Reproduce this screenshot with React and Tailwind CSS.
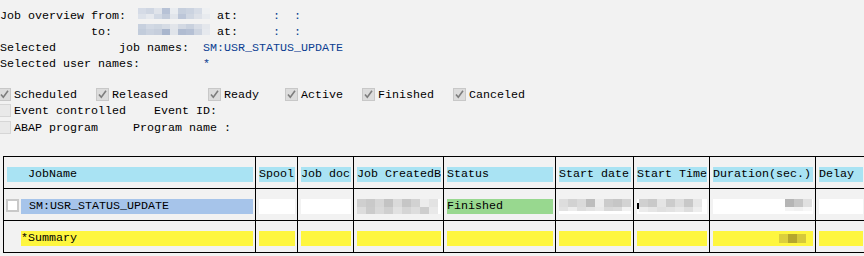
import React from "react";

const mono = "font-['Liberation_Mono','Courier_New',monospace]";

// blurred field: rows of colour cells, each cell `cell` px wide
function Mosaic({ rows, cell = 8, className = "" }) {
  return (
    <div className={`flex flex-col ${className}`}>
      {rows.map((r, i) => (
        <div key={i} className="flex" style={{ height: r.h }}>
          {r.c.map((c, j) => (
            <div key={j} style={{ width: r.w || cell, background: c }} />
          ))}
        </div>
      ))}
    </div>
  );
}

function Check({ checked }) {
  return (
    <span
      className={`inline-flex items-center justify-center w-[13px] h-[13px] shrink-0 border ${
        checked ? "bg-[#dcdcdc] border-[#c8c8c8]" : "bg-[#e9e9e9] border-[#d6d6d6]"
      }`}
    >
      {checked && (
        <svg width="11" height="11" viewBox="0 0 11 11">
          <path d="M2 5.5 L4.3 8.3 L9 1.8" fill="none" stroke="#7d7d7d" strokeWidth="1.6" />
        </svg>
      )}
    </span>
  );
}

function Opt({ label, checked, w }) {
  return (
    <div className={`flex items-start gap-[3px] shrink-0 ${w}`}>
      <Check checked={checked} />
      <span className="leading-[14px]">{label}</span>
    </div>
  );
}

const dateTop = ["#d5dbe6", "#cfd6e2", "#dfe3ea", "#b7c2d6", "#e9ecf0", "#c6cfdd", "#cbd3e0", "#d6dce6", "#eef0f2"];
const dateBot = ["#dde2ea", "#e6e9ee", "#d2d9e4", "#c3ccdb", "#e1e5eb", "#bcc6d8", "#d0d7e2", "#dde1e8", "#e8ebef"];
const date2Top = ["#c7d0de", "#d2d9e4", "#ced6e1", "#d6dce5", "#e2e5ea", "#d3d9e3", "#c9d1de", "#d8dde6", "#e4e7ec"];
const date2Bot = ["#c2ccdb", "#cad2df", "#c6cedc", "#a9b6cd", "#e0e4ea", "#b0bcd1", "#b5c0d4", "#cdd4e0", "#e6e9ee"];

const TimeSep = () => <span className="text-[#0b3d91] whitespace-pre">{"  :  :"}</span>;

function Bar({ bg, className = "", children }) {
  return (
    <div className={`mt-[10px] ml-[3px] mr-[2px] h-[15px] leading-[15px] whitespace-pre overflow-hidden ${bg} ${className}`}>
      {children}
    </div>
  );
}

const headers = ["Spool", "Job doc", "Job CreatedB", "Status", "Start date", "Start Time", "Duration(sec.)", "Delay"];

export default function App() {
  return (
    <div className={`w-[864px] h-[256px] overflow-hidden bg-[#f2f2f2] text-black text-[11.67px] ${mono}`}>
      {/* selection header */}
      <div className="pt-[8px] leading-[16px]">
        <div className="flex h-[16px]">
          <span className="w-[138px] whitespace-pre">Job overview from:</span>
          <Mosaic className="w-[72px]" rows={[{ h: 6, c: dateTop }, { h: 5, c: dateBot }]} />
          <span className="ml-[7px] w-[42px]">at:</span>
          <TimeSep />
        </div>
        <div className="flex h-[16px]">
          <span className="w-[138px] pl-[91px]">to:</span>
          <Mosaic className="w-[72px]" rows={[{ h: 5, c: date2Top }, { h: 6, c: date2Bot }]} />
          <span className="ml-[7px] w-[42px]">at:</span>
          <TimeSep />
        </div>
        <div className="flex h-[16px]">
          <span className="w-[119px]">Selected</span>
          <span className="w-[84px]">job names:</span>
          <span className="text-[#0b3d91]">SM:USR_STATUS_UPDATE</span>
        </div>
        <div className="flex h-[16px]">
          <span className="w-[203px]">Selected user names:</span>
          <span className="text-[#0b3d91]">*</span>
        </div>
      </div>

      {/* status checkboxes */}
      <div className="mt-[16px] -ml-[2px] flex flex-col gap-[3px]">
        <div className="flex h-[13px]">
          <Opt label="Scheduled" checked w="w-[98px]" />
          <Opt label="Released" checked w="w-[112px]" />
          <Opt label="Ready" checked w="w-[77px]" />
          <Opt label="Active" checked w="w-[77px]" />
          <Opt label="Finished" checked w="w-[91px]" />
          <Opt label="Canceled" checked w="w-[100px]" />
        </div>
        <div className="flex h-[13px]">
          <Opt label="Event controlled" w="w-[156px]" />
          <span className="leading-[14px]">Event ID:</span>
        </div>
        <div className="flex h-[14px] mt-[1px]">
          <Opt label="ABAP program" w="w-[135px]" />
          <span className="leading-[14px] whitespace-pre">Program name :</span>
        </div>
      </div>

      {/* job list */}
      <div className="mt-[21px] ml-[3px] w-max grid grid-cols-[251px_41px_55px_89px_111px_77px_75px_105px_49px] grid-rows-[31px_31px_31px] gap-px p-px bg-black">
        <div className="bg-[#f2f2f2]">
          <Bar bg="bg-[#a9e3f3]" className="pl-[21px]">JobName</Bar>
        </div>
        {headers.map((h) => (
          <div key={h} className="bg-[#f2f2f2]">
            <Bar bg="bg-[#a9e3f3]">{h}</Bar>
          </div>
        ))}

        {/* job row */}
        <div className="bg-[#f2f2f2] flex items-start">
          <span className="ml-[2px] mt-[10px] w-[13px] h-[13px] border-2 border-[#c9c9c9] bg-white shrink-0" />
          <div className="mt-[10px] ml-[2px] mr-[2px] flex-1 h-[15px] leading-[15px] pl-[8px] bg-[#a6c4ea] whitespace-pre">
            SM:USR_STATUS_UPDATE
          </div>
        </div>
        <div className="bg-[#f2f2f2]"><Bar bg="bg-white" /></div>
        <div className="bg-[#f2f2f2]"><Bar bg="bg-white" /></div>
        <div className="bg-[#f2f2f2]">
          <Bar bg="bg-white">
            <Mosaic
              cell={9}
              rows={[
                { h: 8, c: ["#cfcfcf", "#c9c9c9", "#d6d6d6", "#c3c3c3", "#dadada", "#c6c6c6", "#d2d2d2", "#ececec", "#e3e3e3"] },
                { h: 7, c: ["#dcdcdc", "#cbcbcb", "#d9d9d9", "#cfcfcf", "#e1e1e1", "#d5d5d5", "#dddddd", "#cdcdcd", "#e9e9e9"] },
              ]}
            />
          </Bar>
        </div>
        <div className="bg-[#f2f2f2]"><Bar bg="bg-[#98d88f]">Finished</Bar></div>
        <div className="bg-[#f2f2f2]">
          <Bar bg="bg-white">
            <Mosaic
              cell={9}
              rows={[
                { h: 8, c: ["#dddddd", "#d2d2d2", "#dadada", "#bdbdbd", "#ececec", "#cbcbcb", "#c6c6c6", "#d3d3d3"] },
                { h: 4, c: ["#e2e2e2", "#ededed", "#dedede", "#e4e4e4", "#e9e9e9", "#d9d9d9", "#dcdcdc", "#f2f2f2"] },
              ]}
            />
          </Bar>
        </div>
        <div className="bg-[#f2f2f2]">
          <Bar bg="bg-white" className="flex">
            <span className="mt-[4px] w-[2px] h-[6px] bg-black shrink-0" />
            <Mosaic
              cell={9}
              rows={[
                { h: 8, c: ["#d0d0d0", "#c9c9c9", "#e4e4e4", "#cccccc", "#dddddd", "#c8c8c8", "#e6e6e6"] },
                { h: 5, c: ["#ececec", "#e6e6e6", "#e0e0e0", "#e3e3e3", "#e8e8e8", "#dedede", "#eeeeee"] },
              ]}
            />
          </Bar>
        </div>
        <div className="bg-[#f2f2f2]">
          <Bar bg="bg-white" className="flex justify-end pr-[1px]">
            <Mosaic
              cell={9}
              rows={[
                { h: 8, c: ["#b5b5b5", "#c6c6c6", "#e0e0e0"] },
                { h: 4, c: ["#f4f4f4", "#f1f1f1", "#f7f7f7"] },
              ]}
            />
          </Bar>
        </div>
        <div className="bg-[#f2f2f2]"><Bar bg="bg-white" /></div>

        {/* summary row */}
        <div className="bg-[#f2f2f2]">
          <div className="mt-[10px] ml-[17px] mr-[2px] h-[15px] leading-[15px] bg-[#fef63f]">*Summary</div>
        </div>
        <div className="bg-[#f2f2f2]"><Bar bg="bg-[#fef63f]" /></div>
        <div className="bg-[#f2f2f2]"><Bar bg="bg-[#fef63f]" /></div>
        <div className="bg-[#f2f2f2]"><Bar bg="bg-[#fef63f]" /></div>
        <div className="bg-[#f2f2f2]"><Bar bg="bg-[#fef63f]" /></div>
        <div className="bg-[#f2f2f2]"><Bar bg="bg-[#fef63f]" /></div>
        <div className="bg-[#f2f2f2]"><Bar bg="bg-[#fef63f]" /></div>
        <div className="bg-[#f2f2f2]">
          <Bar bg="bg-[#fef63f]" className="flex pl-[66px]">
            <Mosaic
              cell={9}
              className="mt-[3px]"
              rows={[{ h: 9, c: ["#dccf3c", "#b5a62d", "#d6c93a"] }]}
            />
          </Bar>
        </div>
        <div className="bg-[#f2f2f2]"><Bar bg="bg-[#fef63f]" /></div>
      </div>
    </div>
  );
}
